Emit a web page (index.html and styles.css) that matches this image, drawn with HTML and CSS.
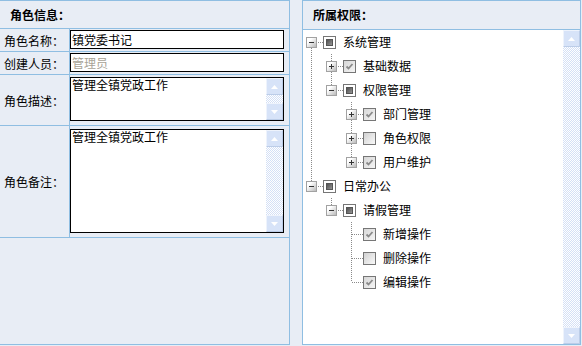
FILE: index.html
```html
<!DOCTYPE html>
<html lang="zh-CN">
<head>
    <meta charset="UTF-8">
    <title>角色信息</title>
    <link rel="stylesheet" href="styles.css">
</head>
<body>

    <!-- shared icons -->
    <svg class="defs" width="0" height="0">
        <defs>
            <linearGradient id="g-exp" x1="0" y1="0" x2="1" y2="1">
                <stop offset="0.3" stop-color="#ffffff"/>
                <stop offset="1" stop-color="#b4b4b4"/>
            </linearGradient>
            <linearGradient id="g-part" x1="0" y1="0" x2="1" y2="1">
                <stop offset="0" stop-color="#4a4a4a"/>
                <stop offset="1" stop-color="#9a9a9a"/>
            </linearGradient>
            <linearGradient id="g-check" x1="0" y1="0" x2="1" y2="1">
                <stop offset="0" stop-color="#d6d6d6"/>
                <stop offset="1" stop-color="#f6f6f6"/>
            </linearGradient>
            <linearGradient id="g-empty" x1="0" y1="0" x2="1" y2="1">
                <stop offset="0" stop-color="#cfcfcf"/>
                <stop offset="1" stop-color="#fbfbfb"/>
            </linearGradient>
            <symbol id="exp-minus" viewBox="0 0 11 11">
                <rect x="0.5" y="0.5" width="10" height="10" fill="url(#g-exp)" stroke="#a2a2a2"/>
                <path d="M3 5.5h5" stroke="#333"/>
            </symbol>
            <symbol id="exp-plus" viewBox="0 0 11 11">
                <rect x="0.5" y="0.5" width="10" height="10" fill="url(#g-exp)" stroke="#a2a2a2"/>
                <path d="M3 5.5h5M5.5 3v5" stroke="#333"/>
            </symbol>
            <symbol id="cb-part" viewBox="0 0 13 13">
                <rect x="0.5" y="0.5" width="12" height="12" fill="#fff" stroke="#767676"/>
                <rect x="3.5" y="3.5" width="6" height="6" fill="url(#g-part)" stroke="#555"/>
            </symbol>
            <symbol id="cb-check" viewBox="0 0 13 13">
                <rect x="0.5" y="0.5" width="12" height="12" fill="url(#g-check)" stroke="#767676"/>
                <path d="M3.5 6.5l2 2 4-4.5" fill="none" stroke="#8a8a8a" stroke-width="1.8"/>
            </symbol>
            <symbol id="cb-empty" viewBox="0 0 13 13">
                <rect x="0.5" y="0.5" width="12" height="12" fill="url(#g-empty)" stroke="#767676"/>
            </symbol>
            <symbol id="arr-up" viewBox="0 0 7 4">
                <path d="M0 4L3.5 0 7 4z" fill="#fff"/>
            </symbol>
            <symbol id="arr-down" viewBox="0 0 7 4">
                <path d="M0 0L3.5 4 7 0z" fill="#fff"/>
            </symbol>
        </defs>
    </svg>

    <div class="page">
        <div class="panel info">
            <div class="head">角色信息：</div>

            <div class="row row-short">
                <label class="label">角色名称：</label>
                <div class="field"><input class="text" type="text" value="镇党委书记"></div>
            </div>
            <div class="row row-short">
                <label class="label">创建人员：</label>
                <div class="field"><input class="text" type="text" placeholder="管理员"></div>
            </div>
            <div class="row row-desc">
                <label class="label">角色描述：</label>
                <div class="field">
                    <div class="area area-desc">
                        <textarea>管理全镇党政工作</textarea>
                        <div class="sbar">
                            <span class="sbtn"><svg width="7" height="4"><use href="#arr-up"/></svg></span>
                            <span class="strack"></span>
                            <span class="sbtn"><svg width="7" height="4"><use href="#arr-down"/></svg></span>
                        </div>
                    </div>
                </div>
            </div>
            <div class="row row-note">
                <label class="label">角色备注：</label>
                <div class="field">
                    <div class="area area-note">
                        <textarea>管理全镇党政工作</textarea>
                        <div class="sbar">
                            <span class="sbtn"><svg width="7" height="4"><use href="#arr-up"/></svg></span>
                            <span class="strack"></span>
                            <span class="sbtn"><svg width="7" height="4"><use href="#arr-down"/></svg></span>
                        </div>
                    </div>
                </div>
            </div>
            <div class="filler"></div>
        </div>

        <div class="panel perm">
            <div class="head head-perm">所属权限：</div>
            <div class="tree-wrap">
                <div class="tree">
                    <div class="node">
                        <span class="cell c-first"><svg class="exp"><use href="#exp-minus"/></svg></span>
                        <span class="cb"><svg><use href="#cb-part"/></svg></span>
                        <span class="txt">系统管理</span>
                    </div>
                    <div class="node">
                        <span class="cell c-i"></span>
                        <span class="cell c-t"><svg class="exp"><use href="#exp-plus"/></svg></span>
                        <span class="cb"><svg><use href="#cb-check"/></svg></span>
                        <span class="txt">基础数据</span>
                    </div>
                    <div class="node">
                        <span class="cell c-i"></span>
                        <span class="cell c-l"><svg class="exp"><use href="#exp-minus"/></svg></span>
                        <span class="cb"><svg><use href="#cb-part"/></svg></span>
                        <span class="txt">权限管理</span>
                    </div>
                    <div class="node">
                        <span class="cell c-i"></span>
                        <span class="cell"></span>
                        <span class="cell c-t"><svg class="exp"><use href="#exp-plus"/></svg></span>
                        <span class="cb"><svg><use href="#cb-check"/></svg></span>
                        <span class="txt">部门管理</span>
                    </div>
                    <div class="node">
                        <span class="cell c-i"></span>
                        <span class="cell"></span>
                        <span class="cell c-t"><svg class="exp"><use href="#exp-plus"/></svg></span>
                        <span class="cb"><svg><use href="#cb-empty"/></svg></span>
                        <span class="txt">角色权限</span>
                    </div>
                    <div class="node">
                        <span class="cell c-i"></span>
                        <span class="cell"></span>
                        <span class="cell c-l"><svg class="exp"><use href="#exp-plus"/></svg></span>
                        <span class="cb"><svg><use href="#cb-check"/></svg></span>
                        <span class="txt">用户维护</span>
                    </div>
                    <div class="node">
                        <span class="cell c-l"><svg class="exp"><use href="#exp-minus"/></svg></span>
                        <span class="cb"><svg><use href="#cb-part"/></svg></span>
                        <span class="txt">日常办公</span>
                    </div>
                    <div class="node">
                        <span class="cell"></span>
                        <span class="cell c-l"><svg class="exp"><use href="#exp-minus"/></svg></span>
                        <span class="cb"><svg><use href="#cb-part"/></svg></span>
                        <span class="txt">请假管理</span>
                    </div>
                    <div class="node">
                        <span class="cell"></span>
                        <span class="cell"></span>
                        <span class="cell c-t"></span>
                        <span class="cb"><svg><use href="#cb-check"/></svg></span>
                        <span class="txt">新增操作</span>
                    </div>
                    <div class="node">
                        <span class="cell"></span>
                        <span class="cell"></span>
                        <span class="cell c-t"></span>
                        <span class="cb"><svg><use href="#cb-empty"/></svg></span>
                        <span class="txt">删除操作</span>
                    </div>
                    <div class="node">
                        <span class="cell"></span>
                        <span class="cell"></span>
                        <span class="cell c-l"></span>
                        <span class="cb"><svg><use href="#cb-check"/></svg></span>
                        <span class="txt">编辑操作</span>
                    </div>
                </div>
                <div class="sbar">
                    <span class="sbtn"><svg width="7" height="4"><use href="#arr-up"/></svg></span>
                    <span class="strack"></span>
                    <span class="sbtn"><svg width="7" height="4"><use href="#arr-down"/></svg></span>
                </div>
            </div>
        </div>
    </div>

</body>
</html>
```

FILE: styles.css
```css
* {
    box-sizing: border-box;
}

body {
    margin: 0;
    background-color: #e8edf5;
    font-family: "Noto Sans CJK SC", sans-serif;
    font-size: 12px;
    color: #000;
}

.defs {
    position: absolute;
    width: 0;
    height: 0;
}

.page {
    display: flex;
    height: 346px;
}

.panel {
    display: flex;
    flex-direction: column;
    height: 345px;
    background-color: #e8edf5;
    border: 1px solid #8fbee2;
}

.info {
    width: 290px;
    border-left: none;
}

.perm {
    width: 279px;
    margin-left: 12px;
}

.head {
    height: 28px;
    padding-left: 10px;
    line-height: 27px;
    font-weight: bold;
    border-bottom: 1px solid #8fbee2;
}

.head-perm {
    height: 29px;
    line-height: 28px;
}

/* form rows */
.row {
    display: flex;
    border-bottom: 1px solid #8fbee2;
}

.row-short { height: 23px; }
.row-desc { height: 51px; }
.row-note { height: 112px; }

.filler {
    flex: 1;
}

.label {
    width: 70px;
    padding-right: 5px;
    display: flex;
    align-items: center;
    justify-content: flex-end;
    border-right: 1px solid #8fbee2;
    white-space: nowrap;
}

.field {
    flex: 1;
    padding-top: 1px;
}

.text {
    display: block;
    width: 214px;
    height: 19px;
    padding: 0 1px;
    border: 1px solid #000;
    font: 12px "Noto Sans CJK SC", sans-serif;
    color: #000;
    outline: none;
}

.text::placeholder {
    color: #a8a396;
}

.area {
    display: flex;
    width: 214px;
    border: 1px solid #000;
    background-color: #fff;
}

.area-desc {
    height: 44px;
    margin-top: 1px;
}

.area-note {
    height: 104px;
    margin-top: 2px;
}

.area textarea {
    flex: 1;
    border: none;
    padding: 0 1px;
    resize: none;
    overflow: hidden;
    outline: none;
    background: transparent;
    font: 12px/14px "Noto Sans CJK SC", sans-serif;
    color: #000;
}

/* fake scrollbars */
.sbar {
    display: flex;
    flex-direction: column;
    width: 17px;
    flex-shrink: 0;
}

.sbtn {
    height: 17px;
    display: flex;
    align-items: center;
    justify-content: center;
    background-color: #d7e3f8;
    border: 1px solid;
    border-color: #eef3fc #bccde8 #bccde8 #eef3fc;
}

.strack {
    flex: 1;
    background: repeating-conic-gradient(#d4e0f6 0 25%, #fff 0 50%) 0 0 / 2px 2px;
}

/* permission tree */
.tree-wrap {
    flex: 1;
    display: flex;
    background-color: #fff;
}

.tree {
    flex: 1;
}

.node {
    display: flex;
    align-items: center;
    height: 24px;
}

.cell {
    width: 20px;
    height: 24px;
    flex-shrink: 0;
    display: flex;
    align-items: center;
    background-repeat: no-repeat;
}

.exp {
    width: 11px;
    height: 11px;
    margin-left: 3px;
}

.c-i {
    background-image: repeating-linear-gradient(#8a8a8a 0 1px, transparent 1px 2px);
    background-position: 8px 0;
    background-size: 1px 24px;
}

.c-t {
    background-image:
        repeating-linear-gradient(#8a8a8a 0 1px, transparent 1px 2px),
        repeating-linear-gradient(to right, #8a8a8a 0 1px, transparent 1px 2px);
    background-position: 8px 0, 9px 12px;
    background-size: 1px 24px, 11px 1px;
}

.c-l {
    background-image:
        repeating-linear-gradient(#8a8a8a 0 1px, transparent 1px 2px),
        repeating-linear-gradient(to right, #8a8a8a 0 1px, transparent 1px 2px);
    background-position: 8px 0, 9px 12px;
    background-size: 1px 12px, 11px 1px;
}

.c-first {
    background-image:
        repeating-linear-gradient(#8a8a8a 0 1px, transparent 1px 2px),
        repeating-linear-gradient(to right, #8a8a8a 0 1px, transparent 1px 2px);
    background-position: 8px 12px, 9px 12px;
    background-size: 1px 12px, 11px 1px;
}

.cb {
    width: 20px;
    height: 13px;
    flex-shrink: 0;
}

.cb svg {
    display: block;
    width: 13px;
    height: 13px;
}

.txt {
    line-height: 24px;
    white-space: nowrap;
}
```
